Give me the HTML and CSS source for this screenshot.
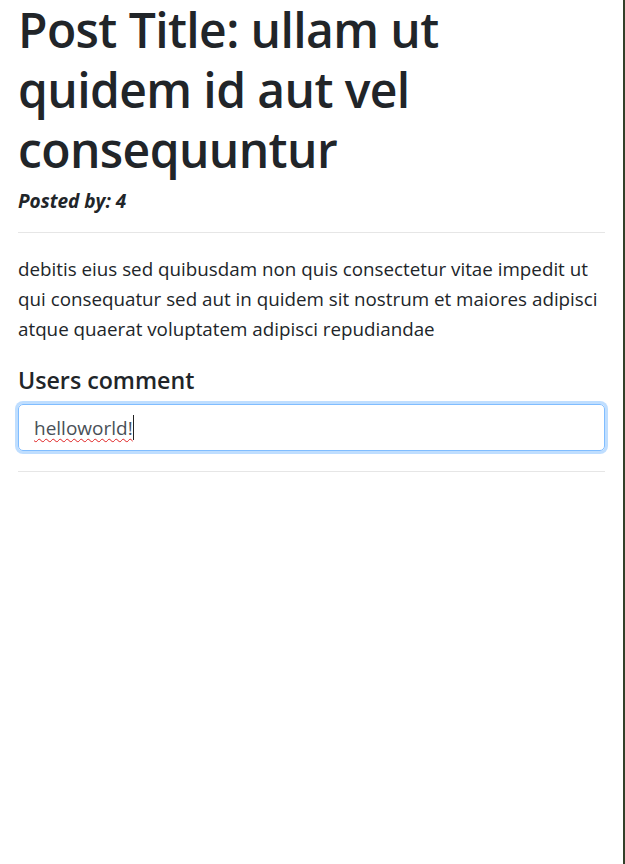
FILE: index.html
```html
<!DOCTYPE html>
<html lang="en">
<head>
<meta charset="utf-8">
<title>Post</title>
<link rel="stylesheet" href="styles.css">
</head>
<body>
<div class="page">
  <div class="post">
    <h1 class="post-title">Post Title: ullam ut quidem id aut vel consequuntur</h1>
    <p class="post-author">Posted by: 4</p>
    <hr class="divider">
    <p class="post-body">debitis eius sed quibusdam non quis consectetur vitae impedit ut qui consequatur sed aut in quidem sit nostrum et maiores adipisci atque quaerat voluptatem adipisci repudiandae</p>
    <h5 class="comments-title">Users comment</h5>
    <div class="comment-input"><span class="typed">helloworld!</span><span class="caret"></span></div>
    <hr class="divider">
  </div>
</div>
</body>
</html>
```

FILE: styles.css
```css
html, body {
  margin: 0;
  padding: 0;
  background: #ffffff;
}
body {
  font-family: "Open Sans", "Noto Sans", sans-serif;
  color: #212529;
}
.page {
  box-sizing: border-box;
  min-height: 100vh;
  width: 625px;
  border-right: 2px solid #34402a;
}
.post {
  padding: 0 18px;
  width: 587px;
}
.post-title {
  margin: 0;
  font-size: 48px;
  line-height: 60px;
  font-weight: 600;
  letter-spacing: -0.6px;
}
.post-author {
  margin: 9px 0 0;
  font-size: 19px;
  line-height: 24px;
  font-weight: 700;
  font-style: italic;
}
.divider {
  border: 0;
  border-top: 1px solid #e6e6e6;
  margin: 19px 0 0;
  height: 0;
}
.post-body {
  margin: 21px 0 0;
  font-size: 18.8px;
  line-height: 30px;
}
.comments-title {
  margin: 21px 0 0;
  font-size: 23.2px;
  line-height: 30px;
  font-weight: 600;
}
.comment-input {
  box-sizing: border-box;
  margin-top: 9px;
  height: 47px;
  border: 1px solid #80bdff;
  border-radius: 5px;
  box-shadow: 0 0 0 3px rgba(0, 123, 255, 0.25);
  padding: 0 15px;
  display: flex;
  align-items: center;
  font-size: 19px;
  color: #495057;
}
.typed {
  text-decoration: underline wavy #e02020;
  text-decoration-thickness: 1px;
  text-underline-offset: 3px;
}
.caret {
  display: inline-block;
  width: 1px;
  height: 25px;
  background: #222;
}
.comment-input + .divider {
  margin-top: 20px;
}
```
